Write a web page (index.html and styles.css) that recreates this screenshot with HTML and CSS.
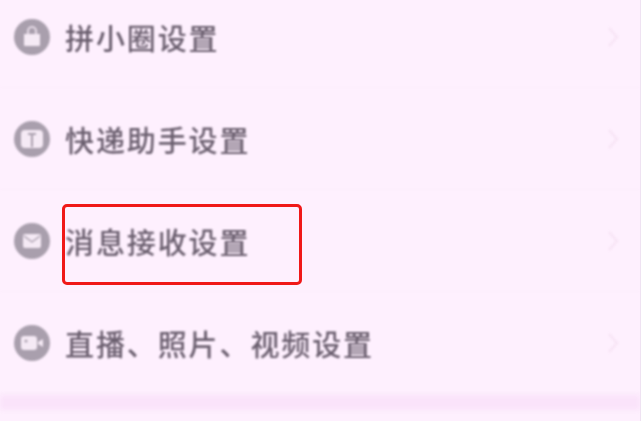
FILE: index.html
```html
<!DOCTYPE html>
<html lang="zh">
<head>
<meta charset="utf-8">
<title>设置</title>
<link rel="stylesheet" href="styles.css">
</head>
<body>
<main class="page">
  <div class="list">
    <div class="row">
      <svg class="icon" viewBox="0 0 36 36"><circle cx="18" cy="18" r="18" fill="#a99fad"/><path d="M10 15h16v11a1 1 0 0 1-1 1H11a1 1 0 0 1-1-1z" fill="#f5eaf5"/><path d="M14 15v-3a4 4 0 0 1 8 0v3" fill="none" stroke="#f5eaf5" stroke-width="1.6"/></svg>
      <span class="label">拼小圈设置</span>
      <svg class="chev" viewBox="0 0 12 22"><path d="M2 2l8 9-8 9" fill="none" stroke="#f7e4f5" stroke-width="2.4"/></svg>
    </div>
    <div class="row">
      <svg class="icon" viewBox="0 0 36 36"><circle cx="18" cy="18" r="18" fill="#a99fad"/><rect x="7" y="9" width="22" height="18" rx="4" fill="#f5eaf5"/><path d="M14 13h8M18 13v13" fill="none" stroke="#a99fad" stroke-width="2"/></svg>
      <span class="label">快递助手设置</span>
      <svg class="chev" viewBox="0 0 12 22"><path d="M2 2l8 9-8 9" fill="none" stroke="#f7e4f5" stroke-width="2.4"/></svg>
    </div>
    <div class="row">
      <svg class="icon" viewBox="0 0 36 36"><circle cx="18" cy="18" r="18" fill="#a99fad"/><rect x="9" y="11" width="18" height="14" rx="2" fill="#f5eaf5"/><path d="M10 13l8 6 8-6" fill="none" stroke="#a99fad" stroke-width="1.3"/></svg>
      <span class="label">消息接收设置</span>
      <svg class="chev" viewBox="0 0 12 22"><path d="M2 2l8 9-8 9" fill="none" stroke="#f7e4f5" stroke-width="2.4"/></svg>
    </div>
    <div class="row">
      <svg class="icon" viewBox="0 0 36 36"><circle cx="18" cy="18" r="18" fill="#a99fad"/><rect x="7" y="11" width="16" height="14" rx="3" fill="#f5eaf5"/><path d="M24 17l5-3v8l-5-3z" fill="#f5eaf5"/><circle cx="12" cy="16" r="1.5" fill="#a99fad"/></svg>
      <span class="label">直播、照片、视频设置</span>
      <svg class="chev" viewBox="0 0 12 22"><path d="M2 2l8 9-8 9" fill="none" stroke="#f7e4f5" stroke-width="2.4"/></svg>
    </div>
  </div>
  <div class="band"></div>
  <div class="highlight"></div>
</main>
</body>
</html>
```
FILE: styles.css
```css
html, body {
  margin: 0;
  padding: 0;
}
body {
  width: 641px;
  height: 421px;
  overflow: hidden;
  background: #fef0fe;
}
.page {
  position: relative;
  width: 641px;
  height: 421px;
  overflow: hidden;
  border-right: 1px solid #efe2f2;
  box-sizing: border-box;
}
.list {
  margin-top: -14px;
  filter: blur(0.9px);
}
.row {
  display: flex;
  align-items: center;
  height: 102px;
  box-sizing: border-box;
  padding: 0 21px 0 14px;
  border-bottom: 1px solid #fcedfc;
}
.icon {
  width: 36px;
  height: 36px;
  flex: none;
}
.label {
  margin-left: 15px;
  flex: 1;
  font-family: "Noto Sans CJK SC", "Liberation Sans", sans-serif;
  font-size: 29px;
  font-weight: 500;
  letter-spacing: 1.9px;
  line-height: 36px;
  color: #6a5e6e;
}
.chev {
  width: 12px;
  height: 22px;
  flex: none;
}
.band {
  height: 15px;
  margin-top: 1px;
  background: #fae3fa;
  filter: blur(2px);
}
.highlight {
  position: absolute;
  left: 62px;
  top: 204px;
  width: 240px;
  height: 81px;
  box-sizing: border-box;
  border: 3px solid #f01818;
  border-radius: 5px;
}
```
